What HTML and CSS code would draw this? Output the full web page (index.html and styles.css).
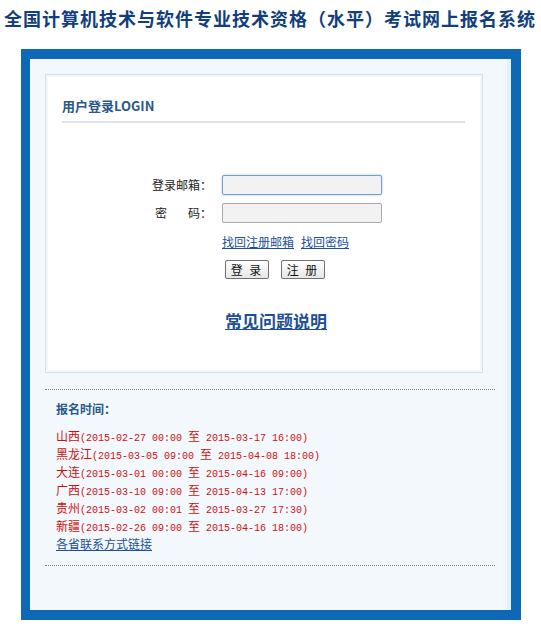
FILE: index.html
```html
<!DOCTYPE html>
<html lang="zh-CN">
<head>
<meta charset="utf-8">
<title>全国计算机技术与软件专业技术资格（水平）考试网上报名系统</title>
<link rel="stylesheet" href="styles.css">
</head>
<body>
<h1 class="site-title">全国计算机技术与软件专业技术资格（水平）考试网上报名系统</h1>
<div class="frame">
  <div class="frame-inner">
    <div class="card">
      <h2 class="card-title">用户登录LOGIN</h2>
      <form class="login-form">
        <label class="lbl">登录邮箱：</label>
        <input class="field focus" type="text">
        <label class="lbl lbl-pw"><span>密</span><span>码：</span></label>
        <input class="field" type="password">
        <div class="links"><a href="#">找回注册邮箱</a><a href="#">找回密码</a></div>
        <div class="buttons"><button type="button" class="btn">登 录</button><button type="button" class="btn">注 册</button></div>
      </form>
      <div class="faq"><a href="#">常见问题说明</a></div>
    </div>
    <div class="dotted"></div>
    <div class="schedule">
      <h3 class="sched-title">报名时间：</h3>
      <ul class="sched-list">
        <li>山西<span class="d">(2015-02-27 00:00 </span>至<span class="d"> 2015-03-17 16:00)</span></li>
        <li>黑龙江<span class="d">(2015-03-05 09:00 </span>至<span class="d"> 2015-04-08 18:00)</span></li>
        <li>大连<span class="d">(2015-03-01 00:00 </span>至<span class="d"> 2015-04-16 09:00)</span></li>
        <li>广西<span class="d">(2015-03-10 09:00 </span>至<span class="d"> 2015-04-13 17:00)</span></li>
        <li>贵州<span class="d">(2015-03-02 00:01 </span>至<span class="d"> 2015-03-27 17:30)</span></li>
        <li>新疆<span class="d">(2015-02-26 09:00 </span>至<span class="d"> 2015-04-16 18:00)</span></li>
      </ul>
      <a class="contact" href="#">各省联系方式链接</a>
    </div>
    <div class="dotted dotted-bottom"></div>
  </div>
</div>
</body>
</html>
```
FILE: styles.css
```css
html, body {
  margin: 0;
  padding: 0;
  background: #ffffff;
  font-family: "Noto Sans CJK SC", "Liberation Sans", sans-serif;
  font-size: 12px;
}
.site-title {
  margin: 7px 0 0 4px;
  font-size: 18px;
  line-height: 22px;
  letter-spacing: 1px;
  font-weight: bold;
  color: #123f7c;
  white-space: nowrap;
}
.frame {
  margin: 20px 0 0 21px;
  width: 500px;
  height: 571px;
  box-sizing: border-box;
  border: 10px solid #0d68b6;
  border-left-width: 9px;
  background: #f3f8fc;
}
.frame-inner {
  height: 100%;
  box-sizing: border-box;
  padding: 15px 0 0 15px;
  border-right: 4px solid #e9f1f8;
}
.card {
  width: 438px;
  height: 299px;
  box-sizing: border-box;
  background: #ffffff;
  border: 1px solid #d3e0eb;
  box-shadow: inset 0 0 0 2px #f3f7fb;
  padding: 22px 17px 0 16px;
}
.card-title {
  margin: 0;
  font-size: 13px;
  line-height: 18px;
  font-weight: bold;
  color: #2a5888;
  padding-bottom: 6px;
  border-bottom: 2px solid #dfe4ea;
}
.login-form {
  display: grid;
  grid-template-columns: 150px 160px;
  column-gap: 10px;
  row-gap: 8px;
  margin-top: 52px;
  align-items: center;
}
.lbl {
  justify-self: end;
  font-size: 12px;
  color: #222;
  line-height: 20px;
}
.lbl-pw {
  width: 57px;
  display: flex;
  justify-content: space-between;
}
.field {
  width: 160px;
  height: 20px;
  box-sizing: border-box;
  margin: 0;
  border: 1px solid #a9a9a9;
  background: #f2f2f2;
  border-radius: 2px;
}
.field.focus {
  border-color: #6f9fd1;
  box-shadow: 0 0 2px #8fb7e3;
}
.links {
  grid-column: 2;
  display: flex;
  gap: 7px;
  margin-top: 2px;
}
.links a, .contact {
  color: #1d4f96;
  font-size: 12px;
  text-decoration: underline;
}
.buttons {
  grid-column: 2;
  display: flex;
  gap: 12px;
  padding-left: 3px;
  margin-top: 2px;
}
.btn {
  width: 44px;
  height: 19px;
  padding: 0;
  font-family: "Noto Sans CJK SC", sans-serif;
  font-size: 12px;
  line-height: 15px;
  letter-spacing: 2px;
  background: linear-gradient(#ffffff, #e6e6e6);
  border: 1px solid #707070;
  border-radius: 2px;
  color: #111;
}
.faq {
  margin: 29px 0 0 163px;
}
.faq a {
  font-size: 17px;
  font-weight: bold;
  color: #1d4f96;
  text-decoration: underline;
}
.dotted {
  width: 450px;
  margin: 16px 0 0 0;
  border-top: 1px dotted #7a7a7a;
}
.schedule {
  padding: 9px 0 0 11px;
}
.sched-title {
  margin: 0;
  font-size: 12px;
  line-height: 20px;
  font-weight: bold;
  color: #2a5888;
}
.sched-list {
  list-style: none;
  margin: 8px 0 0 0;
  padding: 0;
  color: #cc1111;
}
.sched-list li {
  line-height: 18px;
  height: 18px;
  white-space: nowrap;
}
.d {
  font-family: "Liberation Mono", monospace;
  font-size: 10px;
}
.contact {
  display: block;
  line-height: 18px;
}
.dotted-bottom {
  margin-top: 12px;
}
```
